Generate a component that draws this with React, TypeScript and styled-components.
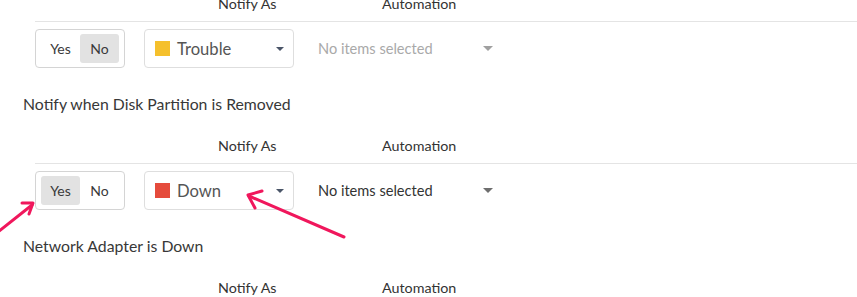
import React from "react";
import styled, { createGlobalStyle } from "styled-components";

const GlobalStyle = createGlobalStyle`
  html, body {
    margin: 0;
    padding: 0;
    background: #ffffff;
    overflow: hidden;
  }
  body {
    font-family: Lato, "Noto Sans", sans-serif;
    color: #333333;
  }
`;

const Page = styled.div`
  position: relative;
  width: 857px;
  height: 297px;
  overflow: hidden;
`;

const Sections = styled.div`
  margin-top: -6px;
`;

const Section = styled.section`
  margin-bottom: 26px;
`;

const Title = styled.div`
  height: 20px;
  line-height: 20px;
  padding-left: 23px;
  font-size: 15.8px;
  color: #383838;
  margin-bottom: 22px;
`;

const HeaderRow = styled.div`
  box-sizing: border-box;
  height: 28px;
  margin-left: 35px;
  border-bottom: 1px solid #e4e4e4;
  display: grid;
  grid-template-columns: 109px 174px 1fr;
  font-size: 14.3px;
  line-height: 20px;
  color: #333333;
`;

type HeaderCellProps = { $indent: number };
const HeaderCell = styled.div<HeaderCellProps>`
  padding-left: ${(p) => p.$indent}px;
  white-space: nowrap;
`;

const ControlsRow = styled.div`
  margin: 7px 0 0 35px;
  display: flex;
  align-items: center;
  height: 39px;
`;

const Toggle = styled.div`
  box-sizing: border-box;
  width: 90px;
  height: 39px;
  border: 1px solid #d4d4d4;
  border-radius: 4px;
  padding: 4px 4px 4px 5px;
  display: flex;
  margin-right: 19px;
`;

type ToggleButtonProps = { $active: boolean };
const ToggleButton = styled.div<ToggleButtonProps>`
  width: 39px;
  height: 29px;
  border-radius: 3px;
  display: flex;
  align-items: center;
  justify-content: center;
  font-size: 14px;
  color: #3a3a3a;
  background: ${(p) => (p.$active ? "#e2e2e2" : "transparent")};
`;

const Select = styled.div`
  box-sizing: border-box;
  width: 150px;
  height: 39px;
  border: 1px solid #dedede;
  border-radius: 4px;
  display: flex;
  align-items: center;
  padding: 0 9px 0 10px;
  margin-right: 24px;
`;

type SwatchProps = { $color: string };
const Swatch = styled.span<SwatchProps>`
  width: 15px;
  height: 15px;
  background: ${(p) => p.$color};
  margin-right: 7px;
`;

const SelectLabel = styled.span`
  flex: 1;
  font-size: 16.6px;
  color: #555555;
`;

type CaretProps = { $color: string; $half: number; $depth: number };
const Caret = styled.span<CaretProps>`
  width: 0;
  height: 0;
  border-left: ${(p) => p.$half}px solid transparent;
  border-right: ${(p) => p.$half}px solid transparent;
  border-top: ${(p) => p.$depth}px solid ${(p) => p.$color};
`;

type AutomationProps = { $disabled: boolean };
const Automation = styled.div<AutomationProps>`
  width: 175px;
  display: flex;
  align-items: center;
  justify-content: space-between;
  font-size: 14.6px;
  color: ${(p) => (p.$disabled ? "#a9a9a9" : "#333333")};
`;

const Arrows = styled.svg`
  position: absolute;
  left: 0;
  top: 0;
  pointer-events: none;
`;

type Rule = {
  title?: string;
  answer: "Yes" | "No";
  status: string;
  color: string;
  disabled: boolean;
  showControls: boolean;
};

const rules: Rule[] = [
  { answer: "No", status: "Trouble", color: "#f5c02c", disabled: true, showControls: true },
  {
    title: "Notify when Disk Partition is Removed",
    answer: "Yes",
    status: "Down",
    color: "#e54b3c",
    disabled: false,
    showControls: true,
  },
  {
    title: "Network Adapter is Down",
    answer: "Yes",
    status: "Down",
    color: "#e54b3c",
    disabled: false,
    showControls: false,
  },
];

function RuleSection({ rule }: { rule: Rule }) {
  return (
    <Section>
      {rule.title && <Title>{rule.title}</Title>}
      <HeaderRow>
        <HeaderCell $indent={0} />
        <HeaderCell $indent={74}>Notify As</HeaderCell>
        <HeaderCell $indent={64}>Automation</HeaderCell>
      </HeaderRow>
      {rule.showControls && (
        <ControlsRow>
          <Toggle>
            <ToggleButton $active={rule.answer === "Yes"}>Yes</ToggleButton>
            <ToggleButton $active={rule.answer === "No"}>No</ToggleButton>
          </Toggle>
          <Select>
            <Swatch $color={rule.color} />
            <SelectLabel>{rule.status}</SelectLabel>
            <Caret $color="#4a5568" $half={4} $depth={4} />
          </Select>
          <Automation $disabled={rule.disabled}>
            No items selected
            <Caret $color={rule.disabled ? "#a0a0a0" : "#6e6e6e"} $half={5} $depth={5} />
          </Automation>
        </ControlsRow>
      )}
    </Section>
  );
}

export default function App() {
  return (
    <Page>
      <GlobalStyle />
      <Sections>
        {rules.map((rule, i) => (
          <RuleSection key={i} rule={rule} />
        ))}
      </Sections>
      <Arrows width="857" height="297" viewBox="0 0 857 297">
        <g stroke="#f0175c" strokeWidth="3" strokeLinecap="round" fill="none">
          <line x1="-2" y1="232" x2="32" y2="205" />
          <polyline points="22,203 33,203 29,214" strokeLinejoin="round" />
          <line x1="344" y1="237" x2="249" y2="196" />
          <polyline points="262,191 248,195 255,208" strokeLinejoin="round" />
        </g>
      </Arrows>
    </Page>
  );
}
